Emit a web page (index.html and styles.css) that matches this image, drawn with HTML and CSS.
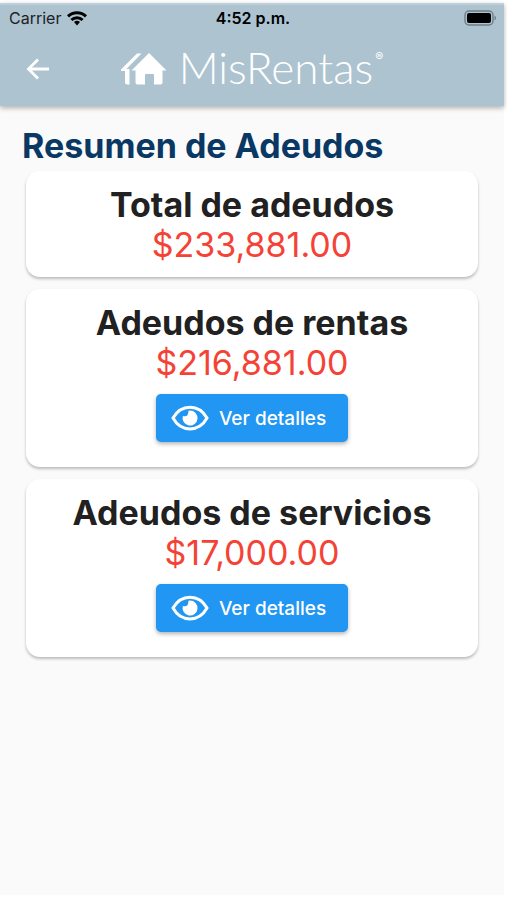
FILE: index.html
```html
<!DOCTYPE html>
<html lang="es">
<head>
  <meta charset="UTF-8" />
  <title>MisRentas</title>
  <meta name="viewport" content="width=device-width, initial-scale=1.0"/>
  <link rel="stylesheet" href="styles.css">
</head>
<body>

<div class="app">
  <header>
    <div class="status-bar">
      <div class="carrier">
        <span>Carrier</span>
        <svg width="20" height="15" viewBox="0 0 20 15" fill="none" stroke="#000" stroke-width="3">
          <path d="M1 5.4C6 .6 14 .6 19 5.4"/>
          <path d="M4.4 9C7.6 5.9 12.4 5.9 15.6 9"/>
          <path d="M7 10.9C8.7 9.3 11.3 9.3 13 10.9L10 14.4Z" fill="#000" stroke="none"/>
        </svg>
      </div>
      <span class="time">4:52 p.m.</span>
      <svg class="battery" width="33" height="16" viewBox="0 0 33 16">
        <rect x="1" y="1" width="28" height="14" rx="4" fill="none" stroke="#6f7e86" stroke-width="1.4"/>
        <rect x="3" y="3" width="24" height="10" rx="2" fill="#000"/>
        <path d="M30.5 5.5C32.5 6.5 32.5 9.5 30.5 10.5Z" fill="#6f7e86"/>
      </svg>
    </div>
    <nav>
      <a class="back" href="#" aria-label="Regresar">
        <svg width="24" height="22" viewBox="0 0 24 22" fill="none" stroke="#fff" stroke-width="2.8">
          <path d="M12 1.5L2.5 11L12 20.5M2.5 11H23"/>
        </svg>
      </a>
      <div class="logo">
        <svg width="46" height="32" viewBox="0 0 46 32" fill="#fff">
          <path d="M16 .5H20.5L5 16.5H0Z"/>
          <path d="M3.5 16H8.5V31.5H6.5Q4 31.5 4 29V18H0V16Z"/>
          <path d="M28 0L45.5 17.5H41.5V29.5Q41.5 31.5 39.5 31.5H33V22Q33 21 32 21H25Q24 21 24 22V31.5H16.5Q14.5 31.5 14.5 29.5V17.5H10.5Z"/>
        </svg>
        <span class="brand">MisRentas</span><span class="mark">®</span>
      </div>
    </nav>
  </header>

  <main>
    <h1>Resumen de Adeudos</h1>

    <section class="card">
      <h2>Total de adeudos</h2>
      <p>$233,881.00</p>
    </section>

    <section class="card">
      <h2>Adeudos de rentas</h2>
      <p>$216,881.00</p>
      <button type="button">
        <svg width="38" height="26" viewBox="0 0 38 26">
          <path d="M2 13C10 -1.5 28 -1.5 36 13C28 27.5 10 27.5 2 13Z" fill="none" stroke="#fff" stroke-width="3"/>
          <path d="M19 5.5A7.5 7.5 0 1 1 11.8 11Q17.5 12.5 17.5 5.7Z" fill="#fff"/>
        </svg>
        Ver detalles
      </button>
    </section>

    <section class="card">
      <h2>Adeudos de servicios</h2>
      <p>$17,000.00</p>
      <button type="button">
        <svg width="38" height="26" viewBox="0 0 38 26">
          <path d="M2 13C10 -1.5 28 -1.5 36 13C28 27.5 10 27.5 2 13Z" fill="none" stroke="#fff" stroke-width="3"/>
          <path d="M19 5.5A7.5 7.5 0 1 1 11.8 11Q17.5 12.5 17.5 5.7Z" fill="#fff"/>
        </svg>
        Ver detalles
      </button>
    </section>
  </main>
</div>

</body>
</html>
```
FILE: styles.css
```css
* { box-sizing: border-box; }
body {
  margin: 0; padding: 3px 3px 5px 0; min-height: 100vh; display: flex;
  background: white; color: #212121; font-family: Inter, "Liberation Sans", sans-serif;
}
.app { flex: 1; background: #fafafa; }
header { background: #adc3cf; border-top: 2px solid #bdd0da; box-shadow: 0 2px 5px rgba(0,0,0,0.3); }
.status-bar {
  display: grid; grid-template-columns: 1fr auto 1fr; align-items: center;
  height: 26px; padding: 0 7px 0 9px; font-size: 16px;
}
.carrier { display: flex; align-items: center; gap: 6px; color: #1c2226; }
.time { font-weight: 600; color: #000; }
.battery { justify-self: end; }
nav { display: grid; grid-template-columns: 1fr auto 1fr; align-items: center; height: 75px; padding: 0 26px; }
.back { display: flex; }
.logo { display: flex; align-items: center; color: white; }
.brand { margin-left: 12px; padding-bottom: 4px; font-family: Lato, sans-serif; font-weight: 300; font-size: 44px; line-height: 48px; }
.mark { align-self: flex-start; padding: 6px 0 0 2px; font-size: 12px; }
main { padding: 20px 26px; }
h1, h2, p { margin: 0; font-size: 34px; line-height: 40px; }
h1 { margin-left: -4px; margin-bottom: 5px; color: #083863; }
p { color: #f44336; }
.card {
  display: flex; flex-direction: column; align-items: center;
  margin-bottom: 12px; padding: 14px 8px 12px;
  background: white; border-radius: 14px; box-shadow: 0 2px 3px rgba(0,0,0,0.25);
}
button {
  display: flex; align-items: center; gap: 10px; height: 48px; margin: 11px 0 13px; padding: 0 22px 0 15px;
  background: #2196f3; color: white; border: 0; border-radius: 5px;
  box-shadow: 0 2px 4px rgba(0,0,0,0.3); font: 500 19px Inter, sans-serif; cursor: pointer;
}
```
